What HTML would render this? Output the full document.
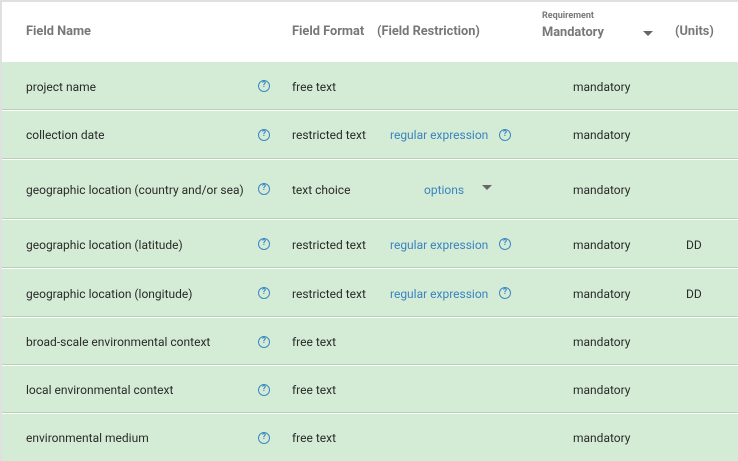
<!DOCTYPE html>
<html><head><meta charset="utf-8"><style>
*{margin:0;padding:0;box-sizing:border-box}
body{width:738px;height:461px;overflow:hidden;background:#fff;font-family:"Roboto","Liberation Sans",sans-serif;font-size:12px;color:#2a2a2a;position:relative}
.frame{position:absolute;left:0;top:0;width:738px;height:461px;border-top:2px solid #e0e0e0;border-left:2px solid #e0e0e0}
.h{position:absolute;font-weight:bold;font-size:12.8px;color:#777;line-height:14px}
.row{position:absolute;left:2px;width:736px;background:#d4ecd5;border-bottom:1px solid #b5d1b6}
.t{position:absolute;line-height:14px;white-space:nowrap}
.l{color:#3b82c0}
.q{position:absolute;width:12px;height:12px;border:1.4px solid #3d86c6;border-radius:50%;color:#3d86c6;font-size:8.5px;font-weight:bold;line-height:9.5px;text-align:center}
.tri{position:absolute;width:0;height:0;border-left:5px solid transparent;border-right:5px solid transparent;border-top:5px solid #666}
</style></head><body>
<div class="frame"></div>
<div class="h" style="left:26px;top:25px">Field Name</div>
<div class="h" style="left:292px;top:25px">Field Format</div>
<div class="h" style="left:377px;top:25px">(Field Restriction)</div>
<div class="h" style="left:542px;top:9px;font-size:9px;font-weight:bold">Requirement</div>
<div class="h" style="left:542px;top:26px">Mandatory</div>
<div class="tri" style="left:643px;top:31px"></div>
<div class="h" style="left:675px;top:25px">(Units)</div>

<div class="row" style="top:62px;height:48px"></div>
<div class="row" style="top:111px;height:48px"></div>
<div class="row" style="top:160px;height:59px"></div>
<div class="row" style="top:220px;height:48px"></div>
<div class="row" style="top:269px;height:48px"></div>
<div class="row" style="top:318px;height:47px"></div>
<div class="row" style="top:366px;height:47px"></div>
<div class="row" style="top:414px;height:47px;border-bottom:none"></div>

<div class="t" style="left:26px;top:80px">project name</div><div class="q" style="left:258px;top:80px">?</div><div class="t" style="left:292px;top:80px">free text</div><div class="t" style="left:573px;top:80px">mandatory</div>

<div class="t" style="left:26px;top:128px">collection date</div><div class="q" style="left:258px;top:129px">?</div><div class="t" style="left:292px;top:128px">restricted text</div><div class="t l" style="left:390px;top:128px">regular expression</div><div class="q" style="left:499px;top:129px">?</div><div class="t" style="left:573px;top:128px">mandatory</div>

<div class="t" style="left:26px;top:183px">geographic location (country and/or sea)</div><div class="q" style="left:258px;top:183px">?</div><div class="t" style="left:292px;top:183px">text choice</div><div class="t l" style="left:424px;top:183px">options</div><div class="tri" style="left:482px;top:185px"></div><div class="t" style="left:573px;top:183px">mandatory</div>

<div class="t" style="left:26px;top:238px">geographic location (latitude)</div><div class="q" style="left:258px;top:238px">?</div><div class="t" style="left:292px;top:238px">restricted text</div><div class="t l" style="left:390px;top:238px">regular expression</div><div class="q" style="left:499px;top:238px">?</div><div class="t" style="left:573px;top:238px">mandatory</div><div class="t" style="left:686px;top:238px">DD</div>

<div class="t" style="left:26px;top:287px">geographic location (longitude)</div><div class="q" style="left:258px;top:287px">?</div><div class="t" style="left:292px;top:287px">restricted text</div><div class="t l" style="left:390px;top:287px">regular expression</div><div class="q" style="left:499px;top:287px">?</div><div class="t" style="left:573px;top:287px">mandatory</div><div class="t" style="left:686px;top:287px">DD</div>

<div class="t" style="left:26px;top:335px">broad-scale environmental context</div><div class="q" style="left:258px;top:336px">?</div><div class="t" style="left:292px;top:335px">free text</div><div class="t" style="left:573px;top:335px">mandatory</div>

<div class="t" style="left:26px;top:383px">local environmental context</div><div class="q" style="left:258px;top:384px">?</div><div class="t" style="left:292px;top:383px">free text</div><div class="t" style="left:573px;top:383px">mandatory</div>

<div class="t" style="left:26px;top:431px">environmental medium</div><div class="q" style="left:258px;top:432px">?</div><div class="t" style="left:292px;top:431px">free text</div><div class="t" style="left:573px;top:431px">mandatory</div>
</body></html>
